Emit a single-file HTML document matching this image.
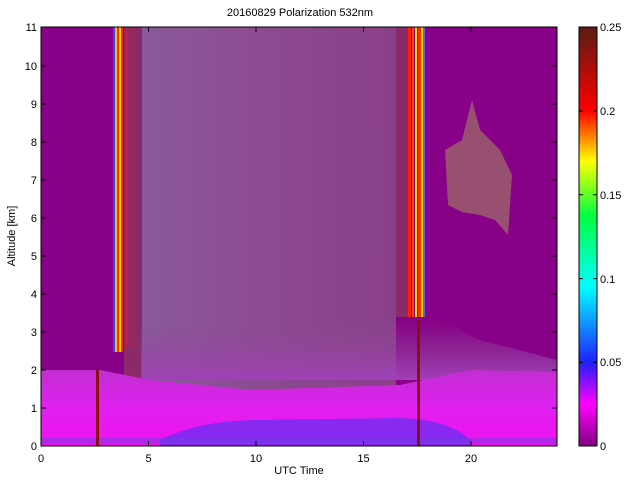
<!DOCTYPE html>
<html><head><style>
body{margin:0;width:640px;height:480px;background:#fff;overflow:hidden;font-family:"Liberation Sans",sans-serif}
</style></head><body>
<svg width="640" height="480" xmlns="http://www.w3.org/2000/svg" font-family="Liberation Sans, sans-serif" font-size="11">
<defs>
<linearGradient id="cb" x1="0" y1="1" x2="0" y2="0">
<stop offset="0" stop-color="#800080"/>
<stop offset="0.1" stop-color="#ff00ff"/>
<stop offset="0.2" stop-color="#2020ff"/>
<stop offset="0.38" stop-color="#00ffff"/>
<stop offset="0.55" stop-color="#00ff40"/>
<stop offset="0.68" stop-color="#ffff00"/>
<stop offset="0.8" stop-color="#ff0000"/>
<stop offset="1" stop-color="#5a1c14"/>
</linearGradient>
<linearGradient id="low" x1="0" y1="0" x2="0" y2="1">
<stop offset="0" stop-color="#c030d0"/>
<stop offset="0.5" stop-color="#e020f0"/>
<stop offset="1" stop-color="#f010f0"/>
</linearGradient>
<linearGradient id="mid" x1="0" y1="0" x2="1" y2="0">
<stop offset="0" stop-color="#8a5a9a"/>
<stop offset="0.5" stop-color="#8c4a90"/>
<stop offset="1" stop-color="#8a4088"/>
</linearGradient>
<linearGradient id="fade" x1="0" y1="0" x2="0" y2="1">
<stop offset="0" stop-color="#8c4a90" stop-opacity="0"/>
<stop offset="1" stop-color="#a040b8"/>
</linearGradient>
</defs>
<text x="300" y="16" text-anchor="middle">20160829 Polarization 532nm</text>
<rect x="41" y="27" width="516" height="419" fill="#870087"/>
<rect x="140" y="27" width="256" height="419" fill="url(#mid)"/>
<rect x="124" y="27" width="18" height="419" fill="#8a2a6a"/>
<!-- left stripes -->
<rect x="113" y="27" width="2" height="325" fill="#4040ff"/>
<rect x="115" y="27" width="2" height="325" fill="#f0c000"/>
<rect x="117" y="27" width="2" height="325" fill="#ff3000"/>
<rect x="119" y="27" width="2" height="325" fill="#e0e000"/>
<rect x="121" y="27" width="2" height="325" fill="#ff2000"/>
<rect x="126" y="27" width="2" height="320" fill="#c02040"/>
<rect x="131" y="27" width="2" height="320" fill="#b02040"/>
<!-- right stripes -->
<rect x="396" y="27" width="12" height="290" fill="#8a2a6a"/>
<rect x="408" y="27" width="3" height="290" fill="#ff2000"/>
<rect x="412" y="27" width="2" height="290" fill="#ff4000"/>
<rect x="415" y="27" width="2" height="290" fill="#e0e000"/>
<rect x="418" y="27" width="3" height="290" fill="#ff3000"/>
<rect x="421" y="27" width="2" height="290" fill="#e0e000"/>
<rect x="423" y="27" width="2" height="290" fill="#6060ff"/>
<!-- cirrus -->
<polygon points="445,150 462,140 472,100 480,130 500,150 512,175 508,235 495,220 480,215 462,212 448,205" fill="#985070"/>
<!-- boundary layer -->
<path d="M141,330 L396,320 L440,320 L480,340 L557,360 L557,380 L141,380 Z" fill="url(#fade)"/>
<path d="M41,370 L100,370 L150,380 L250,390 L400,385 L470,370 L557,372 L557,446 L41,446 Z" fill="url(#low)"/>
<path d="M160,440 Q200,420 260,420 L400,418 Q450,420 470,440 L470,446 L160,446 Z" fill="#6030f0" opacity="0.7"/>
<rect x="41" y="438" width="516" height="6" fill="#7040e0" opacity="0.5"/>
<rect x="96" y="370" width="3" height="76" fill="#8a1010"/>
<rect x="417" y="320" width="3" height="126" fill="#8a1010"/>
<!-- axes -->
<rect x="41" y="27" width="516" height="419" fill="none" stroke="#000" stroke-width="1"/>
<g stroke="#000">
<path d="M41,446v-5M148.5,446v-5M256,446v-5M363.5,446v-5M471,446v-5M41,27v5M148.5,27v5M256,27v5M363.5,27v5M471,27v5"/>
<path d="M41,446h5M41,408h5M41,370h5M41,332h5M41,294h5M41,256h5M41,218h5M41,180h5M41,142h5M41,104h5M41,66h5M41,27h5"/>
<path d="M557,446h-5M557,408h-5M557,370h-5M557,332h-5M557,294h-5M557,256h-5M557,218h-5M557,180h-5M557,142h-5M557,104h-5M557,66h-5M557,27h-5"/>
</g>
<g text-anchor="end">
<text x="37" y="450">0</text><text x="37" y="412">1</text><text x="37" y="374">2</text><text x="37" y="336">3</text>
<text x="37" y="298">4</text><text x="37" y="260">5</text><text x="37" y="222">6</text><text x="37" y="184">7</text>
<text x="37" y="146">8</text><text x="37" y="108">9</text><text x="37" y="70">10</text><text x="37" y="31">11</text>
</g>
<g text-anchor="middle">
<text x="41" y="462">0</text><text x="148.5" y="462">5</text><text x="256" y="462">10</text><text x="363.5" y="462">15</text><text x="471" y="462">20</text>
<text x="299" y="474">UTC Time</text>
</g>
<text transform="translate(15,236) rotate(-90)" text-anchor="middle">Altitude [km]</text>
<rect x="579" y="27" width="18" height="419" fill="url(#cb)" stroke="#000"/>
<g stroke="#000"><path d="M597,27h-4M597,111h-4M597,194.8h-4M597,278.6h-4M597,362.4h-4M597,446h-4M579,111h4M579,194.8h4M579,278.6h4M579,362.4h4"/></g>
<g>
<text x="600" y="31">0.25</text><text x="600" y="115">0.2</text><text x="600" y="199">0.15</text>
<text x="600" y="283">0.1</text><text x="600" y="366">0.05</text><text x="600" y="450">0</text>
</g>
</svg>
</body></html>
